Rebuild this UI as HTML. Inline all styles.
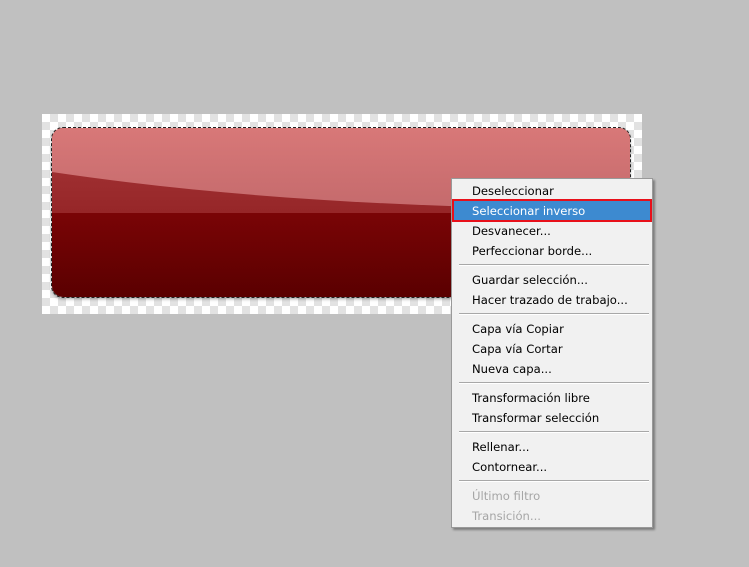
<html><head><style>
body{margin:0;width:749px;height:567px;background:#c0c0c0;position:relative;overflow:hidden;font-family:Tahoma,"DejaVu Sans","Liberation Sans",sans-serif}
.chk{position:absolute;left:42px;top:114px;width:600px;height:200px;background-color:#fff;background-image:linear-gradient(45deg,#e2e2e2 25%,transparent 25%,transparent 75%,#e2e2e2 75%),linear-gradient(45deg,#e2e2e2 25%,transparent 25%,transparent 75%,#e2e2e2 75%);background-size:16px 16px;background-position:0 0,8px 8px}
.btn{position:absolute;left:52px;top:128px;width:578px;height:169px;border-radius:11px;overflow:hidden;background:linear-gradient(#8c0c0e 0%,#7a0406 50%,#5a0000 100%);box-shadow:0 2px 3px rgba(0,0,0,.35);outline:1px dashed #222}
.menu{position:absolute;left:451px;top:178px;width:202px;height:350px;background:#f1f1f1;border:1px solid #999;box-sizing:border-box;box-shadow:2px 2px 2px rgba(0,0,0,.35);font-size:11.6px}
.it{position:absolute;left:20px;height:20px;line-height:20px;color:#000}
.dis{color:#a6a6a6}
.sep{position:absolute;left:7px;right:3px;height:0;border-top:1px solid #a8a8a8;border-bottom:1px solid #fff}
.hl{position:absolute;left:0;top:20px;width:200px;height:23px;box-sizing:border-box;border:2px solid #e8101a;background:#3d8ad0}
</style></head><body>
<div class="chk"></div>
<div class="btn"><svg width="578" height="169" style="position:absolute;left:0;top:0">
<defs><linearGradient id="g" x1="0" y1="0" x2="0" y2="1"><stop offset="0" stop-color="#d87878"/><stop offset="1" stop-color="#c46a6c"/></linearGradient>
<linearGradient id="b" x1="0" y1="0" x2="0" y2="1"><stop offset="0" stop-color="#a8383a"/><stop offset="1" stop-color="#962628"/></linearGradient></defs>
<rect x="0" y="0" width="578" height="85" fill="url(#b)"/>
<path d="M0 0H578V82C400 80 200 74 0 44Z" fill="url(#g)"/>
</svg></div>
<div class="menu">
<div class="hl"></div>
<div class="it" style="top:2px">Deseleccionar</div>
<div class="it" style="top:22px;color:#fff">Seleccionar inverso</div>
<div class="it" style="top:42px">Desvanecer...</div>
<div class="it" style="top:62px">Perfeccionar borde...</div>
<div class="sep" style="top:85px"></div>
<div class="it" style="top:91px">Guardar selección...</div>
<div class="it" style="top:111px">Hacer trazado de trabajo...</div>
<div class="sep" style="top:134px"></div>
<div class="it" style="top:140px">Capa vía Copiar</div>
<div class="it" style="top:160px">Capa vía Cortar</div>
<div class="it" style="top:180px">Nueva capa...</div>
<div class="sep" style="top:203px"></div>
<div class="it" style="top:209px">Transformación libre</div>
<div class="it" style="top:229px">Transformar selección</div>
<div class="sep" style="top:252px"></div>
<div class="it" style="top:258px">Rellenar...</div>
<div class="it" style="top:278px">Contornear...</div>
<div class="sep" style="top:301px"></div>
<div class="it dis" style="top:307px">Último filtro</div>
<div class="it dis" style="top:327px">Transición...</div>
</div>
</body></html>
